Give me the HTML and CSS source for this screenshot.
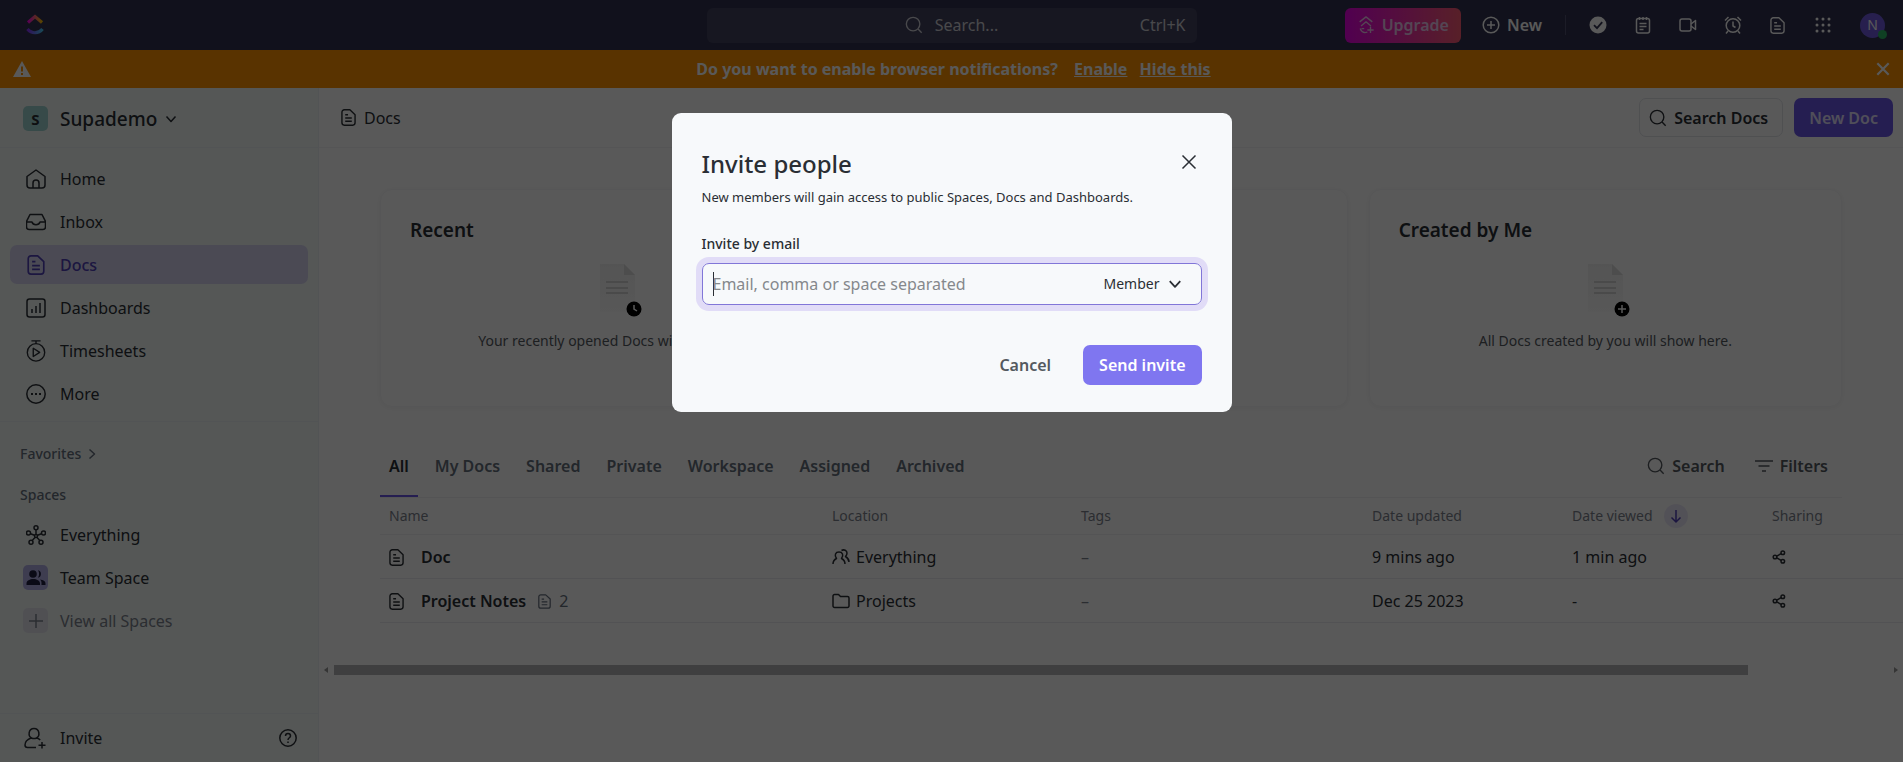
FILE: index.html
```html
<!DOCTYPE html>
<html lang="en">
<head>
    <meta charset="UTF-8">
    <meta name="viewport" content="width=device-width, initial-scale=1.0">
    <title>Docs | Supademo</title>
    <link rel="stylesheet" href="styles.css">
</head>
<body>
    <!-- Shared icons -->
    <svg class="sprite" aria-hidden="true">
        <linearGradient id="paper" x2="0" y2="1"><stop offset="0" stop-color="#f1f1f1"/><stop offset="1" stop-color="#fbfbfb"/></linearGradient>
        <symbol id="i-doc" viewBox="2 1 16 18">
            <path d="M5.500 1.800h6l5.500 5.200v8.700a2.500 2.500 0 0 1-2.500 2.500h-9A2.500 2.500 0 0 1 3 15.700V4.300a2.500 2.500 0 0 1 2.500-2.500zM6.500 7h3M6.500 10.500h7M6.500 14h7"/>
        </symbol>
        <symbol id="i-search" viewBox="0 0 20 20">
            <circle cx="9" cy="9" r="7.500"/><path d="M14.500 14.500l4 4"/>
        </symbol>
        <symbol id="i-down" viewBox="0 0 12 12"><path d="M1.500 3.500L6 8.500l4.500-5"/></symbol>
        <symbol id="i-right" viewBox="0 0 12 12"><path d="M3.500 1.500L8.500 6l-5 4.500"/></symbol>
        <symbol id="i-close" viewBox="0 0 16 16"><path d="M1.500 1.500l13 13M14.500 1.500l-13 13"/></symbol>
        <symbol id="i-share" viewBox="0 0 14 14">
            <circle cx="3" cy="7" r="1.800"/><circle cx="10.800" cy="2.800" r="1.800"/><circle cx="10.800" cy="11.200" r="1.800"/><path d="M4.700 6.200l4.400-2.500M4.700 7.800l4.400 2.500"/>
        </symbol>
    </svg>

    <header class="topbar">
        <a class="logo" href="#" aria-label="Home">
            <svg width="18" height="22" viewBox="0 0 18 22" fill="none" stroke-width="3.200">
                <defs>
                    <linearGradient id="logoTop"><stop offset="0" stop-color="#ff02f0"/><stop offset="1" stop-color="#ffc800"/></linearGradient>
                    <linearGradient id="logoBottom"><stop offset="0" stop-color="#8930fd"/><stop offset="1" stop-color="#49ccf9"/></linearGradient>
                </defs>
                <path d="M2 8.500L9 2.500l7 6" stroke="url(#logoTop)"/>
                <path d="M1.500 15c4 5 11 5 15 0" stroke="url(#logoBottom)"/>
            </svg>
        </a>
        <button class="global-search">
            <span class="global-search-label"><svg class="icon s18"><use href="#i-search"/></svg>Search...</span>
            <span class="shortcut">Ctrl+K</span>
        </button>
        <div class="topbar-actions">
            <button class="upgrade">
                <svg class="icon s18" viewBox="0 0 18 20"><path d="M2 6.500L9 1l7 5.500M3.500 11L9 6.500l5.500 4.500M2.500 14c1.500 4 5 5 8 4M14 12v7M10.500 15.500h7M4 14h3"/></svg>
                Upgrade
            </button>
            <button class="new-btn">
                <svg class="icon s18" viewBox="0 0 18 18"><circle cx="9" cy="9" r="7.800"/><path d="M9 5v8M5 9h8"/></svg>
                New
            </button>
            <span class="divider"></span>
            <button class="tool" aria-label="Tasks">
                <svg class="s18" viewBox="0 0 18 18"><circle cx="9" cy="9" r="8.500" fill="#fff"/><path d="M5 9.200l3 3 5.200-6" fill="none" stroke="#333350" stroke-width="1.800"/></svg>
            </button>
            <button class="tool" aria-label="Notepad">
                <svg class="icon s18" viewBox="0 0 18 18"><rect x="2.500" y="2.500" width="13" height="14.500" rx="2"/><path d="M5.500 1v3M9 1v3M12.500 1v3M5.500 7.500h7M5.500 10.500h7M5.500 13.500h4"/></svg>
            </button>
            <button class="tool" aria-label="Record clip">
                <svg class="icon s18" viewBox="0 0 18 18"><rect x="1" y="3" width="11" height="12" rx="2"/><path d="M12 8l4.500-3.500v9L12 10"/></svg>
            </button>
            <button class="tool" aria-label="Reminder">
                <svg class="icon s18" viewBox="0 0 18 18"><circle cx="9" cy="9.500" r="6.800"/><path d="M9 5.500v4.500l2.500 1.500M1 4.500L4.500 1M17 4.500L13.500 1M4 15l-2 2.500M14 15l2 2.500"/></svg>
            </button>
            <button class="tool" aria-label="Doc"><svg class="icon doc-icon"><use href="#i-doc"/></svg></button>
            <button class="tool" aria-label="Apps">
                <svg class="s18" viewBox="0 0 18 18" fill="#fff"><circle cx="3" cy="3" r="1.500"/><circle cx="9" cy="3" r="1.500"/><circle cx="15" cy="3" r="1.500"/><circle cx="3" cy="9" r="1.500"/><circle cx="9" cy="9" r="1.500"/><circle cx="15" cy="9" r="1.500"/><circle cx="3" cy="15" r="1.500"/><circle cx="9" cy="15" r="1.500"/><circle cx="15" cy="15" r="1.500"/></svg>
            </button>
            <button class="avatar" aria-label="Account">N<span class="status"></span></button>
        </div>
    </header>

    <div class="banner">
        <svg width="18" height="16" viewBox="0 0 18 16"><path d="M9 0l9 16H0z" fill="#fff"/><path d="M9 5.500v5M9 12v2" stroke="#ff9200" stroke-width="2"/></svg>
        <p class="banner-text">Do you want to enable browser notifications? <a href="#">Enable</a> <a href="#">Hide this</a></p>
        <button class="banner-close" aria-label="Close"><svg class="icon s14"><use href="#i-close"/></svg></button>
    </div>

    <div class="layout">
        <aside class="sidebar">
            <button class="workspace">
                <span class="badge teal">S</span>
                Supademo
                <svg class="icon s12"><use href="#i-down"/></svg>
            </button>
            <nav class="nav main-nav">
                <a href="#"><svg class="icon s20" viewBox="0 0 20 20"><path d="M1 7.500L10 1l9 6.500V16a3 3 0 0 1-3 3H4a3 3 0 0 1-3-3zM7 19v-5a3 3 0 0 1 6 0v5"/></svg>Home</a>
                <a href="#"><svg class="icon s20" viewBox="0 0 20 20"><path d="M4 2.500h12l3.500 7V15a2.500 2.500 0 0 1-2.500 2.500H3A2.500 2.500 0 0 1 .500 15V9.500zM.500 10H6c1 3.500 7 3.500 8 0h5.500"/></svg>Inbox</a>
                <a href="#" class="active"><svg class="icon s20"><use href="#i-doc"/></svg>Docs</a>
                <a href="#"><svg class="icon s20" viewBox="0 0 20 20"><rect x="1" y="1" width="18" height="18" rx="2.500"/><path d="M6 11v4M10 8v7M14 5v10"/></svg>Dashboards</a>
                <a href="#"><svg class="icon s22" viewBox="0 0 22 24"><circle cx="11" cy="13.500" r="9.500"/><path d="M8 9v9l7-4.500zM6 1h10M11 1v3"/></svg>Timesheets</a>
                <a href="#"><svg class="icon s20" viewBox="0 0 20 20"><circle cx="10" cy="10" r="9.200"/><path d="M5 10h2M9 10h2M13 10h2" stroke-width="2"/></svg>More</a>
            </nav>
            <button class="section-title">Favorites <svg class="icon s12"><use href="#i-right"/></svg></button>
            <h2 class="section-title">Spaces</h2>
            <nav class="nav">
                <a href="#"><svg class="icon s20" viewBox="0 0 20 20"><circle cx="10" cy="2.800" r="2"/><circle cx="2.500" cy="8" r="2"/><circle cx="17.500" cy="8" r="2"/><circle cx="5" cy="17.200" r="2"/><circle cx="15" cy="17.200" r="2"/><circle cx="10" cy="11" r="1.500"/><path d="M10 5v4.500M4.500 8.700l4 1.600M15.500 8.700l-4 1.600M6.200 15.500l3-3.300M13.800 15.500l-3-3.300"/></svg>Everything</a>
                <a href="#"><span class="badge lilac"><svg class="s20" viewBox="0 0 20 20" fill="#202040"><circle cx="7" cy="6" r="3.800"/><path d="M12 2.300a3.800 3.800 0 0 1 0 7.400c1.500-2.500 1.500-5 0-7.400zM.500 17v-1.500C.500 9.500 14 9.500 14 15.500V17zM15.500 17v-2c0-1.500-.500-2.600-1.500-3.500 3 .300 5.500 1.500 5.500 4V17z"/></svg></span>Team Space</a>
                <a href="#" class="muted"><span class="badge gray"><svg class="icon s16" viewBox="0 0 16 16"><path d="M8 1v14M1 8h14"/></svg></span>View all Spaces</a>
            </nav>
            <div class="sidebar-footer">
                <a href="#"><svg class="icon s22" viewBox="0 0 22 22"><path d="M10 1.500c6 0 6 8 2.500 9.500-1.500.700-3.500.700-5 0C4 9.500 4 1.500 10 1.500zM7 11c-4 1.500-6 4-6 7 0 2 1 2.500 2.500 2.500H12M18 15v6.500M14.500 18.300h7M13 11c1.500.500 2.500 1.200 3.200 2"/></svg>Invite</a>
                <button class="help" aria-label="Help"><svg class="icon s18" viewBox="0 0 18 18"><circle cx="9" cy="9" r="8.200"/><path d="M6.500 7c0-3.300 5-3.300 5 0 0 1.800-2.500 1.800-2.500 4M9 12.500V14"/></svg></button>
            </div>
        </aside>

        <main class="content">
            <div class="page-header">
                <h1><svg class="icon doc-icon"><use href="#i-doc"/></svg>Docs</h1>
                <div class="page-actions">
                    <button class="btn-outline"><svg class="icon s18"><use href="#i-search"/></svg>Search Docs</button>
                    <button class="btn-primary">New Doc</button>
                </div>
            </div>

            <div class="cards">
                <section class="card">
                    <h2>Recent</h2>
                    <div class="empty">
                        <svg width="50" height="56" viewBox="0 0 50 56"><path d="M8 2h24l11 11v37H8z" fill="url(#paper)"/><path d="M32 2v11h11z" fill="#dcdcdc"/><path d="M14 20h22M14 26h22M14 31h22" stroke="#d4d4d4" stroke-width="2"/><circle cx="42" cy="47" r="7.500" fill="#000"/><path d="M42 43v4l3 2" fill="none" stroke="#fff" stroke-width="1.500"/></svg>
                        <p>Your recently opened Docs will show here.</p>
                    </div>
                </section>
                <section class="card"></section>
                <section class="card">
                    <h2>Created by Me</h2>
                    <div class="empty">
                        <svg width="50" height="56" viewBox="0 0 50 56"><path d="M8 2h24l11 11v37H8z" fill="url(#paper)"/><path d="M32 2v11h11z" fill="#dcdcdc"/><path d="M14 20h22M14 26h22M14 31h22" stroke="#d4d4d4" stroke-width="2"/><circle cx="42" cy="47" r="7.500" fill="#000"/><path d="M42 43v8M38 47h8" stroke="#fff" stroke-width="1.500"/></svg>
                        <p>All Docs created by you will show here.</p>
                    </div>
                </section>
            </div>

            <div class="tabs-row">
                <div class="tabs">
                    <button class="active">All</button>
                    <button>My Docs</button>
                    <button>Shared</button>
                    <button>Private</button>
                    <button>Workspace</button>
                    <button>Assigned</button>
                    <button>Archived</button>
                </div>
                <div class="table-tools">
                    <button><svg class="icon s18"><use href="#i-search"/></svg>Search</button>
                    <button><svg class="icon s18" viewBox="0 0 18 18"><path d="M0 4h18M3.500 9h11M7 14h4"/></svg>Filters</button>
                </div>
            </div>

            <table class="docs">
                <thead>
                    <tr>
                        <th>Name</th>
                        <th class="col-location">Location</th>
                        <th class="col-tags">Tags</th>
                        <th class="col-date">Date updated</th>
                        <th class="col-date"><span class="sorted">Date viewed <span class="sort-icon"><svg class="icon s14" viewBox="0 0 14 14"><path d="M7 1v12M2.500 8.500L7 13l4.500-4.500"/></svg></span></span></th>
                        <th class="col-sharing">Sharing</th>
                    </tr>
                </thead>
                <tbody>
                    <tr>
                        <td><div class="doc-name"><svg class="icon doc-icon"><use href="#i-doc"/></svg><a href="#">Doc</a></div></td>
                        <td><div class="location"><svg class="icon s18" viewBox="0 0 18 18"><path d="M1 16c0-3 1.500-4.500 3.500-5.500C2 7 3.500 4 7 4s5 3 2.500 6.500c2 1 3.500 2.500 3.500 5.500M9.500 2.500C12 1 15 2.500 15 5c0 2-.800 2.700-1.500 3.500 2.500 1.500 3.500 3 3.500 5.500"/></svg>Everything</div></td>
                        <td class="dash">–</td>
                        <td>9 mins ago</td>
                        <td>1 min ago</td>
                        <td><button class="share" aria-label="Share"><svg class="icon s14"><use href="#i-share"/></svg></button></td>
                    </tr>
                    <tr>
                        <td><div class="doc-name"><svg class="icon doc-icon"><use href="#i-doc"/></svg><a href="#">Project Notes</a><span class="count"><svg class="icon doc-icon small"><use href="#i-doc"/></svg>2</span></div></td>
                        <td><div class="location"><svg class="icon s18" viewBox="0 0 18 18"><path d="M1 4a1.500 1.500 0 0 1 1.500-1.500h4L8.500 4.500h7A1.500 1.500 0 0 1 17 6v8a1.500 1.500 0 0 1-1.500 1.500h-13A1.500 1.500 0 0 1 1 14z"/></svg>Projects</div></td>
                        <td class="dash">–</td>
                        <td>Dec 25 2023</td>
                        <td>-</td>
                        <td><button class="share" aria-label="Share"><svg class="icon s14"><use href="#i-share"/></svg></button></td>
                    </tr>
                </tbody>
            </table>

            <div class="scrollbar">
                <svg width="4" height="6" viewBox="0 0 4 6"><path d="M4 0v6L0 3z" fill="#999"/></svg>
                <div class="track"><div class="thumb"></div></div>
                <svg width="4" height="6" viewBox="0 0 4 6"><path d="M0 0v6l4-3z" fill="#999"/></svg>
            </div>
        </main>
    </div>

    <div class="overlay">
        <form class="modal" role="dialog" aria-labelledby="modalTitle">
            <div class="modal-head">
                <h2 id="modalTitle">Invite people</h2>
                <button type="button" aria-label="Close"><svg class="icon s16"><use href="#i-close"/></svg></button>
            </div>
            <p>New members will gain access to public Spaces, Docs and Dashboards.</p>
            <label for="email">Invite by email</label>
            <div class="email-box">
                <span class="caret"></span>
                <input type="text" id="email" placeholder="Email, comma or space separated" autofocus>
                <div class="role">
                    <select aria-label="Role"><option>Member</option></select>
                    <svg class="icon s14"><use href="#i-down"/></svg>
                </div>
            </div>
            <div class="modal-actions">
                <button type="button" class="cancel">Cancel</button>
                <button type="submit" class="send">Send invite</button>
            </div>
        </form>
    </div>
</body>
</html>
```
FILE: styles.css
```css
* {
    box-sizing: border-box;
}

body {
    font-family: "Noto Sans", "Open Sans", sans-serif;
    font-size: 16px;
    line-height: 24px;
    color: #2a2e34;
    background: #fff;
    margin: 0;
    min-height: 100vh;
    display: flex;
    flex-direction: column;
}

h1, h2, p {
    margin: 0;
}

a {
    color: inherit;
    text-decoration: none;
}

button, input, select {
    font: inherit;
    color: inherit;
    background: none;
    border: none;
    padding: 0;
    margin: 0;
}

button {
    cursor: pointer;
}

svg {
    flex-shrink: 0;
}

.sprite {
    position: absolute;
    width: 0;
    height: 0;
}

.icon {
    fill: none;
    stroke: currentColor;
    stroke-width: 1.5;
    stroke-linejoin: round;
}

.s12 { width: 12px; height: 12px; }
.s14 { width: 14px; height: 14px; }
.s16 { width: 16px; height: 16px; }
.s18 { width: 18px; height: 18px; }
.s20 { width: 20px; height: 20px; }
.s22 { width: 22px; height: 22px; }

.doc-icon {
    width: 15px;
    height: 17px;
}

.doc-icon.small {
    width: 13px;
    height: 15px;
}

/* Top bar */
.topbar {
    height: 50px;
    padding: 0 18px;
    background: #333350;
    color: #fff;
    display: grid;
    grid-template-columns: 1fr minmax(0, 490px) 1fr;
    align-items: center;
}

.logo {
    display: flex;
    margin-left: 8px;
}

.global-search {
    height: 35px;
    padding: 0 11px;
    border-radius: 6px;
    background: #434360;
    color: #d0d0d8;
    display: grid;
    grid-template-columns: 1fr auto 1fr;
    align-items: center;
}

.global-search-label {
    grid-column: 2;
    display: flex;
    align-items: center;
    gap: 12px;
}

.shortcut {
    text-align: right;
}

.topbar-actions {
    display: flex;
    align-items: center;
    justify-content: flex-end;
}

.upgrade {
    height: 35px;
    padding: 0 12px;
    border-radius: 6px;
    background: linear-gradient(90deg, #e800e4, #fb5c74);
    color: #f0c8f0;
    font-weight: 600;
    display: flex;
    align-items: center;
    gap: 7px;
}

.new-btn {
    margin-left: 21px;
    font-weight: 600;
    display: flex;
    align-items: center;
    gap: 7px;
}

.divider {
    width: 1px;
    height: 20px;
    margin: 0 9px 0 23px;
    background: #505070;
}

.tool {
    width: 45px;
    height: 34px;
    display: flex;
    align-items: center;
    justify-content: center;
}

.avatar {
    position: relative;
    width: 25px;
    height: 25px;
    margin-left: 15px;
    border-radius: 50%;
    background: #6f5be0;
    font-size: 14px;
}

.status {
    position: absolute;
    right: -2px;
    bottom: -1px;
    width: 9px;
    height: 9px;
    border-radius: 50%;
    background: #2cb765;
}

/* Notification banner */
.banner {
    height: 38px;
    padding: 0 13px;
    background: #ff9200;
    color: #fff;
    display: flex;
    align-items: center;
    justify-content: space-between;
}

.banner-text {
    font-weight: 700;
}

.banner-text a {
    margin-left: 8px;
    text-decoration: underline;
}

.banner-text a:first-child {
    margin-left: 12px;
}

.banner-close {
    display: flex;
}

.banner-close .icon {
    stroke-width: 2.5;
}

/* Sidebar */
.layout {
    flex: 1;
    display: flex;
}

.sidebar {
    width: 319px;
    background: #f3f9f7;
    border-right: 1px solid #ecf1f2;
    display: flex;
    flex-direction: column;
}

.workspace {
    height: 60px;
    padding: 2px 23px 0;
    border-bottom: 1px solid #ecf1f2;
    font-size: 19px;
    font-weight: 500;
    display: flex;
    align-items: center;
    gap: 8px;
}

.badge {
    width: 25px;
    height: 25px;
    border-radius: 5px;
    display: flex;
    align-items: center;
    justify-content: center;
}

.teal {
    background: #9fd5d0;
    font-size: 15px;
    font-weight: 700;
    margin-right: 4px;
}

.lilac {
    background: #b3b0e6;
}

.gray {
    background: #e6e6ee;
}

.nav {
    padding: 0 10px;
    display: flex;
    flex-direction: column;
    gap: 4px;
}

.main-nav {
    padding: 11px 10px 8px;
    border-bottom: 1px solid #ecf1f2;
}

.nav a {
    height: 39px;
    padding-left: 13px;
    border-radius: 7px;
    display: flex;
    align-items: center;
    gap: 12px;
}

.nav a > .s20 {
    margin: 0 2px 0 3px;
}

.nav a > .s22 {
    margin: 0 1px 0 2px;
}

.nav .active {
    background: #d6d5f0;
    color: #5040b8;
    font-weight: 500;
}

.nav .muted {
    color: #7c828d;
}

.section-title {
    height: 41px;
    padding: 0 20px;
    font-size: 14px;
    font-weight: 500;
    color: #656f7d;
    display: flex;
    align-items: center;
    gap: 5px;
}

button.section-title {
    margin-top: 11px;
}

.sidebar-footer {
    margin-top: auto;
    height: 49px;
    padding: 0 21px 0 24px;
    border-top: 1px solid #ecf1f2;
    display: flex;
    align-items: center;
    justify-content: space-between;
}

.sidebar-footer a {
    display: flex;
    align-items: center;
    gap: 14px;
}

.help {
    display: flex;
}

/* Page */
.content {
    flex: 1;
    min-width: 0;
}

.page-header {
    height: 60px;
    padding: 0 10px 0 22px;
    border-bottom: 1px solid #f3f3f5;
    display: flex;
    align-items: center;
    justify-content: space-between;
}

.page-header h1 {
    font-size: 16px;
    font-weight: 400;
    display: flex;
    align-items: center;
    gap: 8px;
}

.page-actions {
    display: flex;
    gap: 11px;
}

.btn-outline, .btn-primary {
    height: 39px;
    border-radius: 7px;
    font-weight: 600;
    display: flex;
    align-items: center;
}

.btn-outline {
    padding: 0 14px 0 9px;
    border: 1px solid #e2e4e9;
    gap: 7px;
}

.btn-primary {
    padding: 0 15px;
    background: #6a57e8;
    color: #e4e0ff;
}

.cards {
    padding: 41px 61px 0;
    display: grid;
    grid-template-columns: repeat(3, 1fr);
    gap: 21px;
}

.card {
    height: 218px;
    padding: 28px 29px;
    border: 1px solid #f6f6f8;
    border-radius: 12px;
    box-shadow: 0 1px 5px rgba(0, 0, 0, 0.05);
}

.card h2 {
    font-size: 19px;
    font-weight: 600;
}

.empty {
    margin-top: 20px;
    font-size: 14px;
    color: #54595f;
    display: flex;
    flex-direction: column;
    align-items: center;
    gap: 11px;
}

.tabs-row {
    height: 91px;
    margin: 0 61px;
    padding-top: 29px;
    border-bottom: 1px solid #f1f1f4;
    display: flex;
    justify-content: space-between;
}

.tabs {
    display: flex;
    gap: 8px;
}

.tabs button {
    padding: 0 9px;
    border-bottom: 2px solid transparent;
    font-weight: 600;
    color: #656f7d;
}

.tabs .active {
    color: #2a2e34;
    border-color: #6a57e8;
}

.table-tools {
    padding: 0 14px 2px 0;
    display: flex;
    gap: 30px;
}

.table-tools button {
    font-weight: 600;
    color: #54595f;
    display: flex;
    align-items: center;
    gap: 7px;
}

/* Docs table */
.docs {
    width: calc(100% - 61px);
    margin-left: 61px;
    border-collapse: collapse;
    table-layout: fixed;
}

.docs th {
    height: 36px;
    padding: 0 0 0 9px;
    border-bottom: 1px solid #f1f1f4;
    font-size: 14px;
    font-weight: 400;
    text-align: left;
    color: #7c828d;
}

.docs td {
    height: 44px;
    padding: 2px 0 0 9px;
    border-bottom: 1px solid #ebecf0;
}

.col-location { width: 249px; }
.col-tags { width: 291px; }
.col-date { width: 200px; }
.col-sharing { width: 140px; }

.sorted {
    display: flex;
    align-items: center;
    gap: 11px;
}

.sort-icon {
    width: 24px;
    height: 24px;
    border-radius: 50%;
    background: #ece9f8;
    color: #5040b8;
    display: flex;
    align-items: center;
    justify-content: center;
}

.doc-name, .location, .count {
    display: flex;
    align-items: center;
}

.doc-name a {
    margin-left: 17px;
    font-weight: 600;
}

.location {
    gap: 6px;
}

.count {
    margin-left: 12px;
    gap: 8px;
    color: #656f7d;
}

.dash {
    color: #7c828d;
}

.share {
    display: flex;
}

.scrollbar {
    margin-top: 42px;
    padding: 0 5px;
    display: flex;
    align-items: center;
    gap: 6px;
}

.track {
    flex: 1;
    height: 10px;
}

.thumb {
    width: 91%;
    height: 10px;
    background: #b4b4b8;
}

/* Invite modal */
.overlay {
    position: fixed;
    inset: 0;
    background: rgba(0, 0, 0, 0.65);
    display: flex;
    align-items: flex-start;
    justify-content: center;
    padding-top: 113px;
}

.modal {
    width: 560px;
    padding: 35px 30px 27px;
    border-radius: 9px;
    background: #f7f9fb;
}

.modal-head {
    display: flex;
    align-items: flex-start;
    justify-content: space-between;
}

.modal-head h2 {
    font-size: 24px;
    line-height: 32px;
    font-weight: 500;
}

.modal-head button {
    display: flex;
    padding: 6px 5px;
}

.modal p {
    margin-top: 5px;
    font-size: 13px;
}

.modal label {
    display: block;
    margin: 23px 0 7px;
    font-size: 14px;
    font-weight: 500;
}

.email-box {
    height: 42px;
    padding: 0 19px 0 10px;
    border: 1px solid #8176d8;
    border-radius: 7px;
    box-shadow: 0 0 0 6px #e1dcf7;
    display: flex;
    align-items: center;
}

.caret {
    width: 1px;
    height: 24px;
    margin-right: -1px;
    background: #2a2e34;
}

.email-box input {
    flex: 1;
    outline: none;
    caret-color: transparent;
}

.email-box input::placeholder {
    color: #85888c;
}

.role {
    font-size: 14px;
    display: grid;
    align-items: center;
}

.role select {
    grid-area: 1 / 1;
    padding-right: 22px;
    appearance: none;
}

.role .icon {
    grid-area: 1 / 1;
    justify-self: end;
    pointer-events: none;
}

.modal-actions {
    margin-top: 40px;
    display: flex;
    justify-content: flex-end;
    gap: 32px;
    font-weight: 600;
}

.cancel {
    color: #54595f;
}

.send {
    height: 40px;
    padding: 0 16px;
    border-radius: 7px;
    background: #7f76f0;
    color: #fff;
}
```
